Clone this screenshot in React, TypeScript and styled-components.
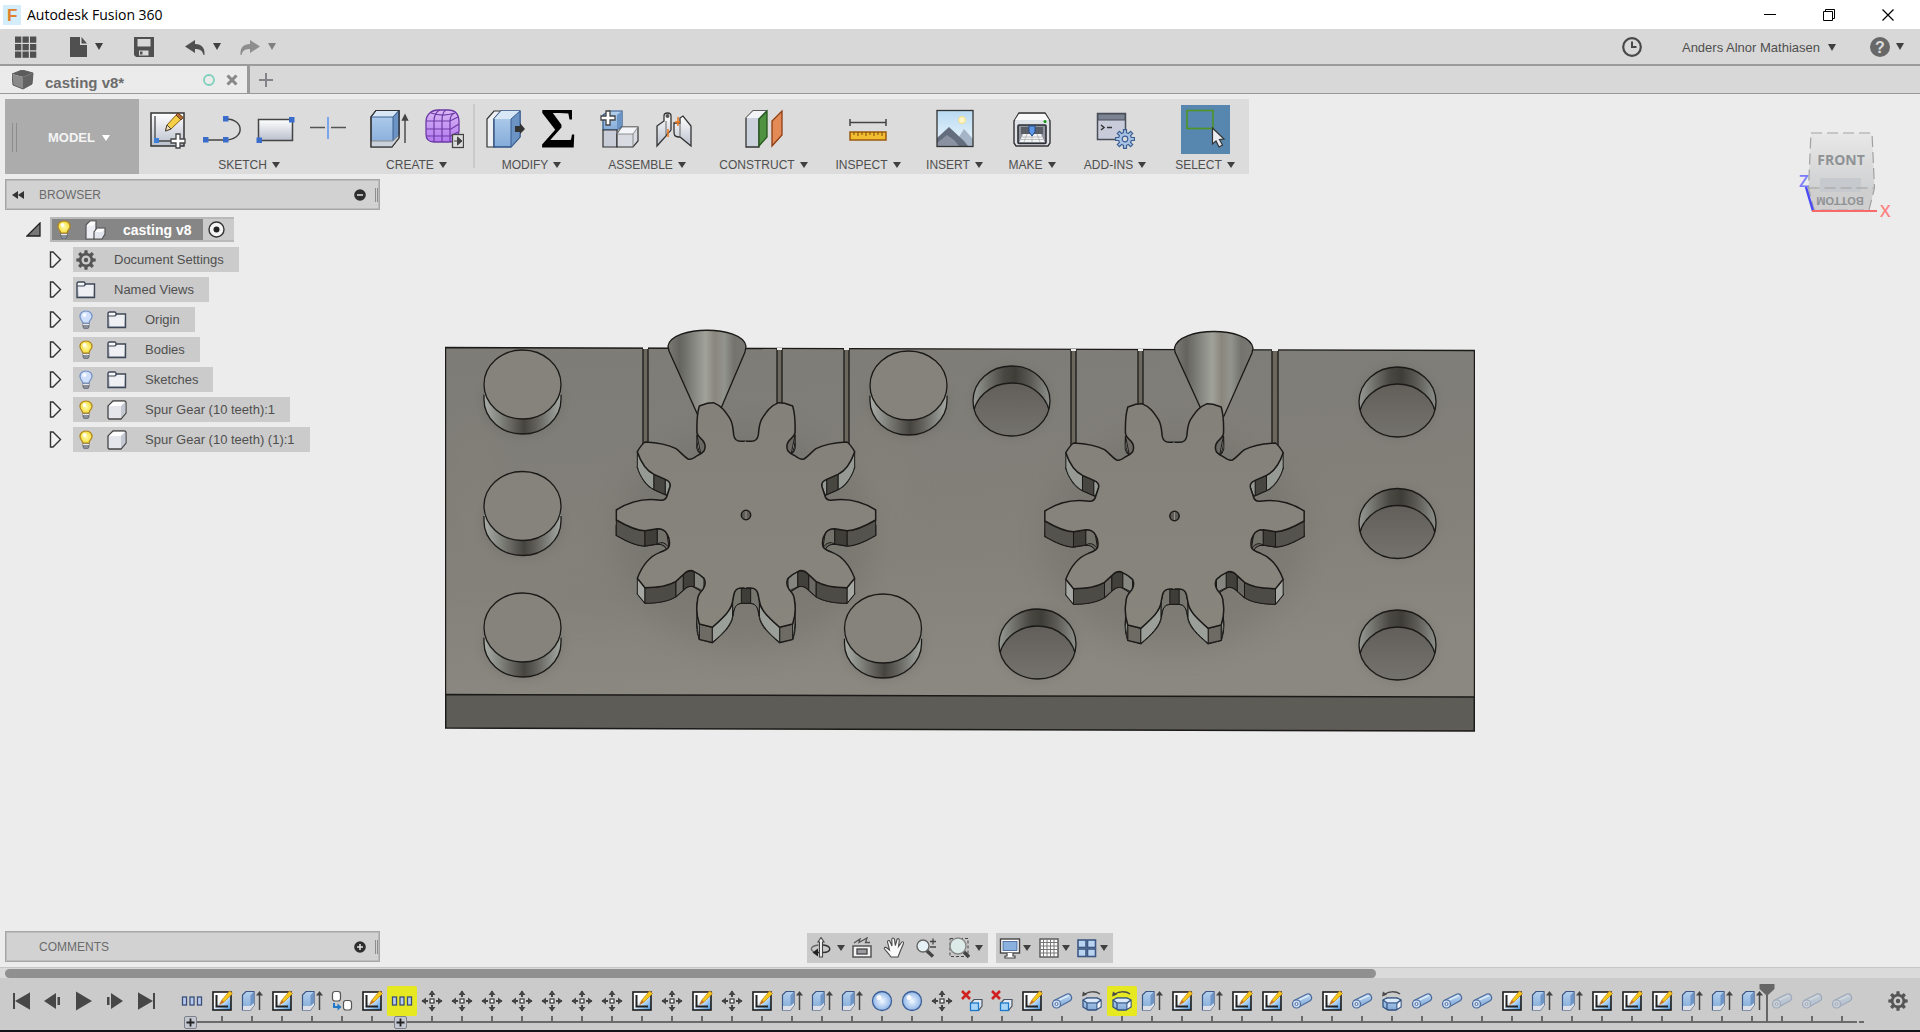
import React from "react";
import styled, { createGlobalStyle, css } from "styled-components";

const GlobalStyle = createGlobalStyle`
  * { box-sizing: border-box; }
  body {
    margin: 0;
    font-family: "Liberation Sans", Arial, sans-serif;
    font-size: 13px;
    color: #4f4f4f;
    background: #ececec;
  }
  button {
    border: 0;
    padding: 0;
    background: none;
    font: inherit;
    color: inherit;
    display: flex;
    align-items: center;
  }
  svg { display: block; flex: none; }
`;

const App = styled.div`
  min-height: 100vh;
  display: flex;
  flex-direction: column;
`;

const Spacer = styled.div`
  flex: 1;
`;

const Caret = styled.span<{ $small?: boolean; $color?: string }>`
  flex: none;
  width: 0;
  height: 0;
  border-style: solid;
  border-width: ${(p) => (p.$small ? "6px 4px 0" : "7px 4px 0")};
  border-color: ${(p) => p.$color || "#404040"} transparent transparent;
`;

/* ---------- title bar ---------- */

const TitleBar = styled.header`
  height: 29px;
  flex: none;
  display: flex;
  align-items: center;
  padding-left: 3px;
  gap: 6px;
  background: #fff;
`;

const AppTitle = styled.h1`
  margin: 0;
  flex: 1;
  font: 400 14px/20px "Open Sans", sans-serif;
  color: #000;
`;

const WindowButton = styled.button`
  width: 59px;
  height: 29px;
  justify-content: center;
`;

const WindowControls = styled.div`
  display: flex;
  padding-right: 3px;
`;

/* ---------- quick access bar ---------- */

const QuickBar = styled.div`
  height: 37px;
  flex: none;
  display: flex;
  align-items: center;
  padding: 0 16px 0 15px;
  background: #d8d8d8;
  border-bottom: 2px solid #9b9b9b;
`;

const QuickGroup = styled.div<{ $gap: number }>`
  display: flex;
  align-items: center;
  gap: ${(p) => p.$gap}px;
`;

const QuickButton = styled.button<{ $gap?: number }>`
  gap: ${(p) => p.$gap ?? 8}px;
  min-width: 20px;
  height: 24px;
`;

const UserButton = styled(QuickButton)`
  min-width: 160px;
  justify-content: flex-end;
  padding-top: 2px;
`;

/* ---------- document tabs ---------- */

const TabBar = styled.nav`
  height: 28px;
  flex: none;
  display: flex;
  background: #d8d8d8;
  border-bottom: 1px solid #999;
`;

const Tab = styled.div`
  width: 250px;
  display: flex;
  align-items: center;
  padding: 0 9px 0 12px;
  gap: 11px;
  background: #ebebeb;
  border-right: 3px solid #999;
`;

const TabName = styled.button`
  flex: 1;
  font-size: 15px;
  font-weight: 700;
  color: #6c6c6c;
  padding-top: 6px;
`;

const NewTab = styled.button`
  width: 32px;
  padding-left: 9px;
`;

/* ---------- viewport ---------- */

const Viewport = styled.main`
  position: relative;
  flex: 1;
  display: flex;
  flex-direction: column;
  align-items: flex-start;
  padding: 5px 5px 4px;
  background: #ececec;
`;

const ModelCanvas = styled.div`
  position: absolute;
  top: 226px;
  left: 0;
  right: 0;
  display: flex;
  justify-content: center;
`;

const CubeCanvas = styled.div`
  position: absolute;
  top: 32px;
  right: 24px;
`;

/* ---------- ribbon ---------- */

const Ribbon = styled.div`
  position: relative;
  display: flex;
  height: 75px;
  background: #dcdcdc;
`;

const Workspace = styled.button`
  width: 134px;
  background: #acacac;
  color: #f4f4f4;
  font-size: 13px;
  font-weight: 700;
  padding: 2px 0 0 7px;
  gap: 7px;
`;

const Grip = styled.span<{ $h: number; $gap: number }>`
  width: ${(p) => p.$gap + 2}px;
  height: ${(p) => p.$h}px;
  border: solid #8d8d8d;
  border-width: 0 1px;
`;

const WorkspaceName = styled.span`
  padding-left: 24px;
`;

const Group = styled.section<{ $w: number }>`
  width: ${(p) => p.$w}px;
  display: flex;
  flex-direction: column;
  align-items: center;
  padding-top: 5px;
  position: relative;
  & + &::before {
    content: "";
    position: absolute;
    left: -1px;
    top: 5px;
    bottom: 6px;
    width: 2px;
    background: #cacaca;
  }
`;

const GroupTools = styled.div`
  display: flex;
  gap: 14px;
  height: 50px;
  align-items: center;
`;

const Tool = styled.button<{ $active?: boolean }>`
  width: 40px;
  height: 40px;
  justify-content: center;
  ${(p) =>
    p.$active &&
    css`
      width: 49px;
      height: 49px;
      background: #5786ae;
    `}
`;

const Sigma = styled.span`
  font: 700 56px/40px "Liberation Serif", serif;
  color: #000;
`;

const GroupLabel = styled.button`
  height: 20px;
  padding-top: 2px;
  font-size: 12px;
  gap: 5px;
`;

/* ---------- side panels ---------- */

const Panel = styled.div`
  width: 375px;
  height: 31px;
  display: flex;
  align-items: center;
  background: #d2d2d2;
  border: 1px solid #a6a6a6;
  outline: 1px solid #bcbcbc;
  outline-offset: -2px;
  font-size: 12px;
  color: #6b6b6b;
  padding: 0 1px 0 6px;
`;

const BrowserPanel = styled(Panel)`
  margin-top: 5px;
  position: relative;
`;

const PanelTitle = styled.h2`
  margin: 0;
  flex: 1;
  font-size: 12px;
  font-weight: 400;
`;

const PanelEnd = styled.div`
  display: flex;
  align-items: center;
  gap: 9px;
`;

const PanelIcon = styled.button`
  width: 27px;
  height: 20px;
`;

const Tree = styled.ul`
  list-style: none;
  margin: 7px 0 0;
  padding: 0 0 0 21px;
  display: flex;
  flex-direction: column;
  gap: 5px;
  position: relative;
`;

const Node = styled.li<{ $child?: boolean }>`
  display: flex;
  align-items: center;
  height: 25px;
  padding-left: ${(p) => (p.$child ? 23 : 0)}px;
`;

const Twisty = styled.button`
  width: 24px;
  height: 20px;
`;

const NodeBox = styled.div`
  height: 25px;
  display: flex;
  align-items: center;
  background: #cbcbcb;
  padding: 0 15px 0 3px;
`;

const NodeIcon = styled.span<{ $wide?: boolean }>`
  width: ${(p) => (p.$wide ? 38 : 31)}px;
  display: flex;
`;

const RootBox = styled(NodeBox)`
  padding: 0 9px 0 0;
  border: 2px solid #b9b9b9;
  border-width: 2px 0 2px 2px;
  gap: 5px;
`;

const RootName = styled.div`
  display: flex;
  align-items: center;
  height: 21px;
  padding: 0 12px 0 2px;
  background: #868686;
  color: #fff;
  font-size: 14px;
  font-weight: 700;
`;

/* ---------- bottom row ---------- */

const BottomRow = styled.div`
  align-self: stretch;
  display: grid;
  grid-template-columns: 1fr auto 1fr;
  align-items: start;
  margin-top: auto;
  position: relative;
`;

const NavBar = styled.div`
  display: flex;
  gap: 8px;
  padding-top: 2px;
`;

const NavGroup = styled.div`
  display: flex;
  align-items: center;
  height: 30px;
  padding: 0 3px;
  background: #c9c9c9;
`;

const NavButton = styled.button<{ $w: number; $gap?: number }>`
  width: ${(p) => p.$w}px;
  height: 30px;
  gap: ${(p) => p.$gap ?? 2}px;
`;

/* ---------- timeline ---------- */

const ScrollTrack = styled.div`
  height: 11px;
  flex: none;
  background: #dadada;
  border-top: 1px solid #c6c6c6;
  padding: 1px 0 0 5px;
`;

const ScrollThumb = styled.div`
  height: 9px;
  width: 71.6%;
  border-radius: 5px;
  background: #909090;
`;

const Timeline = styled.footer`
  height: 54px;
  flex: none;
  display: flex;
  padding: 8px 7px 0 6px;
  background: #cbcbcb;
  border-bottom: 2px solid #15131a;
`;

const Playback = styled.div`
  display: flex;
  padding-right: 16px;
`;

const PlayButton = styled.button`
  width: 31px;
  height: 30px;
  justify-content: center;
`;

const Steps = styled.ol`
  list-style: none;
  display: flex;
  margin: 0;
  padding: 0;
`;

const Step = styled.li<{ $first?: boolean; $faded?: boolean }>`
  width: 30px;
  position: relative;
  &::before {
    content: "";
    position: absolute;
    left: ${(p) => (p.$first ? 15 : 0)}px;
    right: 0;
    top: 35px;
    height: 2px;
    background: #6a6a6a;
  }
  &::after {
    content: "";
    position: absolute;
    left: 14px;
    top: 30px;
    width: 2px;
    height: 6px;
    background: #6a6a6a;
  }
  svg { opacity: ${(p) => (p.$faded ? 0.35 : 1)}; }
`;

const StepButton = styled.button<{ $hot?: boolean }>`
  width: 30px;
  height: 30px;
  justify-content: center;
  border-radius: 2px;
  background: ${(p) => (p.$hot ? "#e6e822" : "none")};
`;

const Expand = styled.button`
  position: absolute;
  z-index: 1;
  left: 7px;
  top: 30px;
  width: 13px;
  height: 13px;
  border: 1px solid #7d8088;
  border-radius: 2px;
  background: #c3c7d2;
  justify-content: center;
`;

const Dashes = styled.span`
  width: 7px;
  height: 2px;
  margin-top: 35px;
  background: linear-gradient(90deg, transparent 2px, #6a6a6a 2px);
`;

const Marker = styled.span`
  position: absolute;
  z-index: 1;
  left: 22px;
  top: -2px;
`;

/* ---------- icons ---------- */

const HiddenSvg = styled.svg`
  position: absolute;
`;

const Defs = () => (
  <HiddenSvg width="0" height="0" aria-hidden="true">
    <defs>
      <linearGradient id="paper" x1="0" y1="0" x2="0" y2="1">
        <stop offset="0" stopColor="#fff" />
        <stop offset="1" stopColor="#b9bfcc" />
      </linearGradient>
      <linearGradient id="blue" x1="0" y1="0" x2="0" y2="1">
        <stop offset="0" stopColor="#b4d0ee" />
        <stop offset="1" stopColor="#84abd8" />
      </linearGradient>
      <linearGradient id="violet" x1="0" y1="0" x2="0" y2="1">
        <stop offset="0" stopColor="#d9b8f5" />
        <stop offset="1" stopColor="#b378f0" />
      </linearGradient>
      <linearGradient id="skyline" x1="0" y1="0" x2="0" y2="1">
        <stop offset="0" stopColor="#b8daf2" />
        <stop offset="1" stopColor="#eef7fc" />
      </linearGradient>
      <linearGradient id="sheet" x1="0" y1="0" x2="1" y2="1">
        <stop offset="0.4" stopColor="#fff" />
        <stop offset="1" stopColor="#3f8fe0" />
      </linearGradient>
      <radialGradient id="ball" cx="0.5" cy="0.5" r="0.5">
        <stop offset="0" stopColor="#f2f8ff" />
        <stop offset="1" stopColor="#8fb6e8" />
      </radialGradient>
      <radialGradient id="lampOn">
        <stop offset="0" stopColor="#fffbb0" />
        <stop offset="1" stopColor="#f5df3c" />
      </radialGradient>
    </defs>
  </HiddenSvg>
);

const Svg = ({ w, h = w, children }: { w: number; h?: number; children: React.ReactNode }) => (
  <svg width={w} height={h} viewBox={`0 0 ${w} ${h}`} fill="none" aria-hidden="true">
    {children}
  </svg>
);

const LogoIcon = () => (
  <svg width="18" height="20" viewBox="0 0 18 20" aria-hidden="true">
    <rect width="18" height="20" fill="#d3eefa" />
    <text x="4" y="16" fontFamily="Liberation Sans" fontWeight="700" fontSize="17" fill="#e0812d">F</text>
  </svg>
);

const GridIcon = () => (
  <Svg w={24} h={22}>
    {[0, 1, 2].map((r) => [0, 1, 2].map((c) => <rect key={`${r}${c}`} x={c * 7.5} y={r * 7.5 + 0.5} width="6.3" height="6.3" fill="#505050" />))}
  </Svg>
);
const FileIcon = () => (
  <Svg w={17} h={20}>
    <path d="M0 0H10V8H17V20H0Z" fill="#505050" />
    <path d="M11.500 0V6.500H17Z" fill="#505050" />
  </Svg>
);
const SaveIcon = () => (
  <Svg w={20}>
    <path d="M0 0H20V20H2L0 18Z" fill="#505050" />
    <path d="M3.500 2H16.500V9.500H3.500ZM5 13.500H14.500V18.500H5Z" fill="#d8d8d8" />
    <path d="M6 14.500H8.500V17.500H6Z" fill="#505050" />
  </Svg>
);
const ArrowIcon = ({ flip, color }: { flip?: boolean; color: string }) => (
  <Svg w={20} h={18}>
    <g transform={flip ? "translate(20 0) scale(-1 1)" : undefined}>
      <path d="M0 8.500L10 2V6C17 6 20 10 19.500 17H18.500C17.500 13 15.500 11 10 11V15Z" fill={color} />
    </g>
  </Svg>
);
const ClockIcon = () => (
  <Svg w={20}>
    <circle cx="10" cy="10" r="8.800" stroke="#484848" strokeWidth="2.200" />
    <path d="M10 4.500V10H14.500" stroke="#484848" strokeWidth="2" />
  </Svg>
);
const HelpIcon = () => (
  <svg width="20" height="20" viewBox="0 0 20 20" aria-hidden="true">
    <circle cx="10" cy="10" r="10" fill="#686868" />
    <text x="10" y="15.500" textAnchor="middle" fontFamily="Liberation Sans" fontWeight="700" fontSize="16" fill="#dcdcdc">?</text>
  </svg>
);
const TabCube = () => (
  <Svg w={22} h={20}>
    <path d="M0 4L10 0L21 3L11 7Z" fill="#5c5c5c" />
    <path d="M0 4L11 7V19L1 15Z" fill="#8a8a8a" />
    <path d="M11 7L21 3L20 14L11 19Z" fill="#636363" />
    <path d="M0 4L1 15L11 19L20 14L21 3L10 0Z" stroke="#5c5c5c" />
  </Svg>
);

const PlusBadge = ({ x, y }: { x: number; y: number }) => (
  <path transform={`translate(${x} ${y})`} d="M-2 -7H2V-2H7V2H2V7H-2V2H-7V-2H-2Z" fill="#fff" stroke="#444" strokeWidth="1.300" />
);

const SketchIcon = () => (
  <Svg w={40}>
    <rect x="3" y="4" width="33" height="33" fill="url(#paper)" stroke="#333" strokeWidth="1.500" />
    <path d="M7 7V32H29" stroke="#444" strokeWidth="1.300" />
    <rect x="6" y="29" width="5" height="5" fill="#3f7fd8" />
    <path d="M17.500 22L19 16L30 4L35 8.500L23 20Z" fill="#f5cf45" stroke="#8a5a12" />
    <path d="M28 6L30 4L35 8.500L33 11Z" fill="#b5703a" stroke="#6b3d18" />
    <path d="M17.500 22L19 16L23 20Z" fill="#f5e2b5" stroke="#444" />
    <PlusBadge x={30} y={32} />
  </Svg>
);
const LineIcon = () => (
  <Svg w={40}>
    <path d="M4 31H23C43 31 43 10 24 10" stroke="#444" strokeWidth="1.500" />
    {[[1, 28], [21, 28], [21, 7]].map(([x, y]) => <rect key={`${x}${y}`} x={x} y={y} width="5.500" height="5.500" fill="#3a6ccc" />)}
  </Svg>
);
const RectIcon = () => (
  <Svg w={40}>
    <rect x="2.500" y="10.500" width="34" height="21" fill="url(#paper)" stroke="#444" strokeWidth="1.500" />
    <rect x="33" y="8" width="5.500" height="5.500" fill="#3a6ccc" />
    <rect x="0.500" y="28.500" width="5.500" height="5.500" fill="#3a6ccc" />
  </Svg>
);
const PointIcon = () => (
  <Svg w={40}>
    <path d="M0 18.500H15M21 18.500H36" stroke="#555" strokeWidth="1.500" />
    <path d="M18 8V30" stroke="#5a94f0" strokeWidth="1.500" />
  </Svg>
);
const ExtrudeIcon = () => (
  <Svg w={40}>
    <path d="M1 32V8L6 1.500H29V28L22 38H1Z" fill="url(#blue)" stroke="#333" strokeWidth="1.200" />
    <path d="M1 8L6 1.500H29L23 8Z" fill="#d8e7f6" stroke="#3a5f92" />
    <path d="M23 8L29 1.500V26L23 33Z" fill="#6b93c4" stroke="#3a5f92" />
    <path d="M1 32H23L29 26V29L22 38H1Z" fill="#ccd2dc" stroke="#888" />
    <path d="M1 32V8L6 1.500H29V29L22 38H1Z" stroke="#333" strokeWidth="1.200" />
    <path d="M35 34V8M32.500 11L35 6L37.500 11Z" stroke="#444" strokeWidth="1.400" fill="#444" />
  </Svg>
);
const FormIcon = () => (
  <Svg w={40}>
    <path d="M2 13C2 5 8 1 14 1H24C31 1 35 5 35 13V22C35 28 31 33 25 33H10C5 33 2 30 2 25Z" fill="url(#violet)" stroke="#6d3aa5" strokeWidth="1.300" />
    <path d="M10 33V12C10 6 13 2 16 1M18 33V12C18 6 20 2 22 1M26 33V12C26 8 28 5 31 4M2 12H26L34 8M2 20H27L35 15M2 27H27L34 23M7 4C15 7 22 7 31 4" stroke="#6d3aa5" strokeWidth="1.200" />
    <rect x="28.500" y="25.500" width="11" height="13" fill="#ddd" stroke="#444" strokeWidth="1.300" />
    <path d="M30 32H34M33.500 28L38 32L33.500 36Z" fill="#444" stroke="#444" />
  </Svg>
);
const PressPullIcon = () => (
  <Svg w={40}>
    <path d="M2 36V10L9 2H16L9 10V38H2Z" fill="#eef0f3" stroke="#333" strokeWidth="1.200" />
    <path d="M9 38V10L16 2H35V28L26 38Z" fill="url(#blue)" stroke="#2d5286" strokeWidth="1.300" />
    <path d="M9 10L16 2H35L26 10Z" fill="#d8e7f6" />
    <path d="M26 10L35 2V28L26 38Z" fill="#6b93c4" stroke="#3a5f92" />
    <path d="M30 17H35V14L40 20L35 25V23H30Z" fill="#333" />
  </Svg>
);
const ComponentIcon = () => (
  <Svg w={40}>
    <path d="M3 21V6L9 2H22V17L17 21Z" fill="url(#blue)" stroke="#2d5286" strokeWidth="1.200" />
    <path d="M17 6L22 2V17L17 21Z" fill="#6b93c4" />
    <path d="M3 21H17V38H3Z" fill="#c9cdd8" stroke="#333" strokeWidth="1.200" />
    <path d="M17 38V25L22 18H38V32L33 38Z" fill="#d8dbe2" stroke="#333" strokeWidth="1.200" />
    <path d="M17 25L22 18H38L33 25Z" fill="#f4f5f8" stroke="#777" strokeWidth="0.800" />
    <path d="M33 25V38" stroke="#777" strokeWidth="0.800" />
    <PlusBadge x={8} y={9} />
  </Svg>
);
const JointIcon = () => (
  <Svg w={40}>
    <path d="M3 17L10 12V7C10 3 17 3 17 7V21C15 24 13 24 12 27L3 37Z" fill="url(#paper)" stroke="#333" strokeWidth="1.300" />
    <path d="M37 37L26 28C20 28 20 26 20 22V14H26V9L29 7L37 17Z" fill="url(#paper)" stroke="#333" strokeWidth="1.300" />
    <path d="M26 14V27M12 12V26" stroke="#666" />
    <path d="M14 20V28M24 8V17M21 13H26" stroke="#f07818" strokeWidth="1.500" />
    <circle cx="13.500" cy="7" r="2" fill="#555" />
  </Svg>
);
const PlaneIcon = () => (
  <Svg w={40}>
    <path d="M2 36V9L9 2H22L15 10V38H2Z" fill="#ccd3de" stroke="#333" strokeWidth="1.300" />
    <path d="M2 9L9 2H22L15 9Z" fill="#f2f4f7" />
    <path d="M15 37V10L23 2V28Z" fill="#4f9242" stroke="#24571d" strokeWidth="1.300" />
    <path d="M28 37V12L38 2V26Z" fill="#e48a57" stroke="#8f3d12" strokeWidth="1.300" />
  </Svg>
);
const MeasureIcon = () => (
  <Svg w={40}>
    <path d="M2 13.500H38M2 10V17M38 10V17" stroke="#444" strokeWidth="1.500" />
    <rect x="2" y="23" width="36" height="8" fill="#f2bd30" stroke="#9a5a0c" strokeWidth="1.500" />
    <path d="M6 23V26M10 23V27M14 23V26M18 23V27M22 23V26M26 23V27M30 23V26M34 23V27" stroke="#7b4a0a" />
  </Svg>
);
const ImageIcon = () => (
  <Svg w={40}>
    <rect x="2" y="1.500" width="36" height="36" fill="url(#skyline)" />
    <circle cx="27" cy="11" r="3.500" fill="#fff6c8" stroke="#f5dc82" />
    <path d="M18 37L29 20L38 30V37Z" fill="#a5b4c6" />
    <path d="M2 29L14 18L29 32L33 37H2Z" fill="#646d7e" />
    <path d="M2 34L12 26L19 31L24 37H2Z" fill="#8a92a2" />
    <rect x="2" y="1.500" width="36" height="36" stroke="#333" strokeWidth="1.300" />
  </Svg>
);
const PrinterIcon = () => (
  <Svg w={40}>
    <path d="M2 12L7 4H33L38 12V34L36 37H4L2 34Z" fill="#dfe2e7" stroke="#333" strokeWidth="1.400" />
    <path d="M3 11L7 5H33L37 11Z" fill="#fafafa" />
    <rect x="6" y="16" width="28" height="18.500" rx="1" fill="#8f949c" stroke="#2c2f34" strokeWidth="1.600" />
    <path d="M9 18H31V25H9Z" fill="#5a5e66" />
    <path d="M11 25H29L32.500 33H7.500Z" fill="#f2f3f5" />
    <path d="M10 28H30M9 30.500H31M15 25L12 33M20 25V33M25 25L28 33" stroke="#a8a8a8" strokeWidth="0.700" />
    <path d="M17 17H23V23L20 27L17 23Z" fill="#5e96e6" stroke="#244d90" />
    <circle cx="33" cy="12.500" r="1.500" fill="#149414" />
  </Svg>
);
const gearPath = (c: number, ro: number, ri: number, teeth: number) => {
  const pts: string[] = [];
  for (let i = 0; i < teeth; i++) {
    const a = (i / teeth) * Math.PI * 2 - Math.PI / 2;
    const step = (Math.PI * 2) / teeth;
    [[-0.3, ri], [-0.2, ro], [0.2, ro], [0.3, ri]].forEach(([o, r]) => {
      pts.push(`${(c + Math.cos(a + o * step) * r).toFixed(2)} ${(c + Math.sin(a + o * step) * r).toFixed(2)}`);
    });
  }
  return `M${pts.join("L")}Z`;
};
const AddInsIcon = () => (
  <Svg w={40}>
    <rect x="2.500" y="4.500" width="28" height="26" fill="#c8ccda" stroke="#4a4e58" strokeWidth="1.500" />
    <rect x="3" y="5" width="27" height="6" fill="#7c8494" stroke="#4a4e58" />
    <path d="M6 16L9 18.500L6 21M12 18.500H17" stroke="#333" strokeWidth="1.500" />
    <g transform="translate(20 20)">
      <path d={gearPath(10, 9.5, 6.5, 8)} fill="#a9c3e6" stroke="#3c5f92" strokeWidth="1.200" />
      <circle cx="10" cy="10" r="2.800" fill="#dcdcdc" stroke="#3c5f92" strokeWidth="1.200" />
    </g>
  </Svg>
);
const SelectIcon = () => (
  <Svg w={49}>
    <rect x="6" y="5.500" width="26" height="18" stroke="#4f9424" strokeWidth="1.600" />
    <path d="M31.500 23V39L35 36L38 42L41.500 40L38.500 34.500L43 34Z" fill="#e9ebf0" stroke="#333" strokeWidth="1.200" />
  </Svg>
);

const Bulb = ({ on }: { on?: boolean }) => (
  <Svg w={18} h={19}>
    <path d="M7 12H13V17L11.500 19H8.500L7 17Z" fill="#8a8f9a" stroke="#565b66" strokeWidth="0.800" />
    <path d="M7 14.500H13" stroke="#e8e8e8" />
    <path d="M10 1C5.500 1 3.800 4 4 7C4.200 9 6 10.500 7 13H13C13 10.500 15.800 9 16 7C16.200 4 14.500 1 10 1Z" fill={on ? "url(#lampOn)" : "#cfdffc"} stroke={on ? "#b0841c" : "#7290c4"} strokeWidth="1.200" />
    <circle cx="8.500" cy="5" r="2" fill="#fff" opacity="0.850" />
  </Svg>
);
const Folder = () => (
  <Svg w={20} h={18}>
    <path d="M1 2.500C1 1.500 1.500 1 2.500 1H8C9 1 9 2 9 3H18.500V16.500H1Z" fill="url(#paper)" stroke="#3e4756" strokeWidth="1.400" />
    <path d="M1 5H8L10 3" stroke="#3e4756" strokeWidth="1.200" />
    <path d="M3 6.500H17V15H3Z" fill="#eef0f4" />
  </Svg>
);
const BoxIcon = () => (
  <Svg w={20}>
    <path d="M1 18V6L6 1H17C18.500 1 19 1.500 19 3V13L14 19H2Z" fill="#e4e6ec" stroke="#444" strokeWidth="1.300" />
    <path d="M2 6L6.500 1.800H18L14 6Z" fill="#fff" />
    <path d="M14 6L18.300 2V13L14 18Z" fill="#c4c8d2" />
  </Svg>
);
const AssemblyIcon = () => (
  <Svg w={21} h={20}>
    <path d="M1 19V5L5 1H11V10L9 19Z" fill="#eceef3" stroke="#555" strokeWidth="1.200" />
    <path d="M1.800 5.500L5.500 1.700H10.500L8 5.500Z" fill="#fff" />
    <path d="M9 19V12L12 8H20V14L17 19Z" fill="#e2e5ec" stroke="#555" strokeWidth="1.200" />
    <path d="M10 12L12.500 9H19.500L17 12Z" fill="#fff" />
  </Svg>
);
const SettingsGear = () => (
  <Svg w={20}>
    <path d={gearPath(10, 9.8, 7.2, 8)} fill="#555" />
    <circle cx="10" cy="10" r="4.500" fill="#cbcbcb" />
    <circle cx="10" cy="10" r="2.200" fill="#555" />
  </Svg>
);
const RoundSign = ({ plus }: { plus?: boolean }) => (
  <Svg w={12}>
    <circle cx="6" cy="6" r="5.800" fill="#2e2e2e" />
    <path d={plus ? "M3 6H9M6 3V9" : "M3 6H9"} stroke="#e4e4e4" strokeWidth="1.500" />
  </Svg>
);

/* timeline icons */
const TSketch = () => (
  <Svg w={22}>
    <rect x="2" y="2" width="18" height="18" fill="url(#sheet)" stroke="#1c1c1c" strokeWidth="1.600" />
    <path d="M5.500 5V16.500H17" stroke="#222" strokeWidth="2" />
    <path d="M9 14L11 10L18.500 1L21.500 3.500L13 12Z" fill="#f7c81c" stroke="#c98a14" strokeWidth="0.800" />
    <path d="M8 15.500L11 10L13 12Z" fill="#c4702a" />
  </Svg>
);
const TExtrude = () => (
  <Svg w={22}>
    <path d="M1.500 16V5L5 1.500H13V15L9.500 20H1.500Z" fill="url(#blue)" stroke="#3c5884" strokeWidth="1.200" />
    <path d="M9.500 5.500L13 1.500V15L9.500 16Z" fill="#6d94c6" />
    <path d="M2 16H9.500L13 13V15.500L9.500 20H2Z" fill="#dde0e6" />
    <path d="M18.500 20V3" stroke="#444" strokeWidth="1.500" />
    <path d="M15 5.500L18.500 1L22 5.500Z" fill="#444" />
  </Svg>
);
const TPattern = () => (
  <Svg w={22}>
    {[1.5, 9, 16.5].map((x) => <rect key={x} x={x} y="7" width="4" height="8" fill="#b9cdf0" stroke="#3a4e78" strokeWidth="1.300" />)}
  </Svg>
);
const TCopy = () => (
  <Svg w={22}>
    <rect x="1.500" y="1.500" width="8" height="9.500" rx="2.500" fill="#fff" stroke="#555" strokeWidth="1.200" />
    <rect x="12.500" y="10.500" width="8" height="9.500" rx="2.500" fill="#fff" stroke="#555" strokeWidth="1.200" />
    <path d="M3 13V17H7" stroke="#1f78c8" strokeWidth="2" />
    <path d="M6.500 13.500L10.500 17L6.500 20.500Z" fill="#1f78c8" />
  </Svg>
);
const TMove = () => (
  <Svg w={22}>
    <rect x="9" y="9" width="4" height="4" fill="#fff" stroke="#444" strokeWidth="1.300" />
    <path d="M11 1V7M11 15V21M1 11H7M15 11H21" stroke="#444" strokeWidth="2" />
    <path d="M7.500 5L11 0.500L14.500 5ZM7.500 17L11 21.500L14.500 17ZM5 7.500L0.500 11L5 14.500ZM17 7.500L21.500 11L17 14.500Z" fill="#444" />
  </Svg>
);
const TSphere = () => (
  <Svg w={22}>
    <circle cx="11" cy="11" r="9.500" fill="url(#ball)" stroke="#3c5e96" strokeWidth="1.300" />
    <circle cx="8" cy="7.500" r="2.500" fill="#fff" opacity="0.900" />
  </Svg>
);
const TDelete = () => (
  <Svg w={22}>
    <path d="M1 1L9 9M9 1L1 9" stroke="#d02020" strokeWidth="2.600" />
    <path d="M10 20V13L13 9.500H21V16L17.500 20.500Z" fill="#dfe9f5" stroke="#4c545f" strokeWidth="1.200" />
    <rect x="9.500" y="13" width="8" height="7.500" fill="#a8d4f8" stroke="#1c78c8" strokeWidth="1.300" />
  </Svg>
);
const TCylinder = () => (
  <Svg w={22}>
    <path d="M3 10.500L16 4C20 3 22 8 19.500 10.500L7 17.500Z" fill="url(#blue)" stroke="#4c6a9c" strokeWidth="1.200" />
    <path d="M8 10L18 5.500" stroke="#dcebfa" strokeWidth="1.500" />
    <ellipse cx="5.500" cy="14" rx="4" ry="4" fill="#cfe0f4" stroke="#4c6a9c" strokeWidth="1.200" />
    <circle cx="5.500" cy="14" r="1.500" fill="#eef4fb" stroke="#4c6a9c" />
  </Svg>
);
const TRevolve = () => (
  <Svg w={22}>
    <path d="M3 5C7 1 15 1 19 4" stroke="#4a4a4a" strokeWidth="1.500" />
    <path d="M1 6.500L2 1.500L6 4.500Z" fill="#4a4a4a" />
    <path d="M2 10L6 8H16L20 10V17L15 20H7L2 17Z" fill="url(#blue)" stroke="#35527f" strokeWidth="1.300" />
    <path d="M2 10L6 13H16L20 10M6 13V19M16 13V19" stroke="#35527f" strokeWidth="1.200" />
    <path d="M3.500 10L6.500 8.800H15.500L18.500 10L15.500 12H6.500Z" fill="#dce9f8" />
    <path d="M16.500 14L19.500 11.500V16.500L16.500 18.500Z" fill="#f2f5fa" />
  </Svg>
);

/* navigation icons */
const OrbitIcon = () => (
  <Svg w={22}>
    <path d="M13 8C22 9 22 15 13 15.500H6" stroke="#333" strokeWidth="1.500" />
    <path d="M8.500 8C0 9 0 13 4 15" stroke="#666" strokeWidth="1.300" />
    <path d="M8 5L11 0.500L14 5H12.500V20H9.500V5Z" fill="#f4f4f4" stroke="#444" strokeWidth="1.100" />
    <path d="M2.500 15.500L8 11.500V19.500Z" fill="#222" />
  </Svg>
);
const LookIcon = () => (
  <Svg w={22}>
    <rect x="2" y="9" width="18" height="11" fill="#f4f4f4" stroke="#555" strokeWidth="1.500" />
    <rect x="6" y="12" width="10" height="5" fill="#9a9ca2" stroke="#444" strokeWidth="1.300" />
    <path d="M3 6L9 2L8 5.500L16 1L14.500 5.500H19" stroke="#555" strokeWidth="1.300" />
  </Svg>
);
const HandIcon = () => (
  <Svg w={22}>
    <path d="M8 20C6 17 3 14 1.500 12C1 10 3 10 4 11L6.500 13L4.500 5C4.300 3 6.500 3 7 4.500L9 9L8.800 2.500C9 0.500 11 0.500 11.500 2.500L12.300 8.500L14 2.500C14.500 1 16.500 1.500 16.300 3.500L15.500 9.500L18.500 5.500C19.500 4 21 5 20.500 6.500L17.500 13.500L15 20Z" fill="#fafafa" stroke="#4a4a4a" strokeWidth="1.100" />
  </Svg>
);
const ZoomIcon = () => (
  <Svg w={22}>
    <path d="M11 13L18 19.500" stroke="#444" strokeWidth="3.500" />
    <circle cx="8" cy="9" r="6" fill="#e6f2f8" stroke="#666" strokeWidth="1.400" />
    <path d="M15 4.500H21M18 1.500V7.500M15 10H21" stroke="#444" strokeWidth="1.300" />
  </Svg>
);
const FitIcon = () => (
  <Svg w={22}>
    <rect x="2" y="1.500" width="18" height="18" stroke="#444" strokeDasharray="3 2" />
    <path d="M15 14L21 20" stroke="#444" strokeWidth="3.500" />
    <circle cx="10" cy="9" r="8" fill="#dcebe8" stroke="#888" strokeWidth="1.400" />
  </Svg>
);
const DisplayIcon = () => (
  <Svg w={22}>
    <rect x="1.500" y="2" width="19" height="14" fill="#fff" stroke="#444" strokeWidth="1.400" />
    <rect x="4" y="4.500" width="14" height="9" fill="#8ab0dd" stroke="#3c5e96" strokeWidth="0.800" />
    <path d="M8 16V19H6V21H16V19H14V16" fill="#fff" stroke="#444" strokeWidth="1.200" />
  </Svg>
);
const GridsIcon = () => (
  <Svg w={22}>
    <rect x="2" y="2" width="18" height="18" fill="#fff" stroke="#555" strokeWidth="1.400" />
    <path d="M5.500 2V20M9 2V20M12.500 2V20M16 2V20M2 5.500H20M2 9H20M2 12.500H20M2 16H20" stroke="#777" />
  </Svg>
);
const ViewsIcon = () => (
  <Svg w={22}>
    {[[2, 3], [11.5, 3], [2, 12], [11.5, 12]].map(([x, y]) => <rect key={`${x}-${y}`} x={x} y={y} width="8" height="7.500" fill="#b9d3f0" stroke="#3c5884" strokeWidth="1.600" />)}
  </Svg>
);

/* ---------- 3D model ---------- */

const INK = "#1b1a18";

// Left half of the ten-tooth outline, traced around a centre line at x = 948.
const HALF =
  "M948 364H932Q914 364 911 345C909 325 909 312 900 296C885 272 875 258 850 248L832 250L808 258C800 285 800 310 801 338Q803 348 812 355Q832 372 822 393Q815 402 800 408Q785 420 774 417C762 410 752 396 738 386C715 374 690 368 645 366Q634 374 622 395C632 425 650 452 672 463L706 478Q724 486 720 500L712 525Q708 542 692 541C660 536 615 534 559 570V600C590 618 620 632 645 632L682 626Q704 626 711 642Q722 660 717 680Q712 690 690 697C655 710 636 738 622 775L645 803C680 803 715 798 738 784L760 764Q772 750 787 752Q808 762 822 775Q830 790 820 806C808 820 802 828 802 846C798 870 804 900 808 912L847 922C878 894 906 870 908 842L912 822Q916 804 934 804H948";

// Wall patches: stretches of the outline, dropped by the wall height.
const PATCHES: [string, string][] = [
  ["M622 395C632 425 650 452 672 463V509C650 498 628 468 622 440Z", "#969a94"],
  ["M672 463L706 478V524L672 509Z", "#484640"],
  ["M706 478Q724 486 720 500L712 522L706 524Z", "#969a94"],
  ["M559 600C590 618 620 632 645 632V678C620 678 590 664 559 646Z", "#55534d"],
  ["M645 632L682 626V672L645 678Z", "#403e39"],
  ["M682 626Q704 626 711 642L717 682Q700 660 682 672Z", "#72716a"],
  ["M622 775L645 803V850L622 822Z", "#a4a7a2"],
  ["M645 803C680 803 715 798 738 784V830C715 845 680 850 645 850Z", "#4d4b45"],
  ["M738 784L760 764V810L738 830Z", "#6a6963"],
  ["M760 764Q772 750 793 754V800Q772 796 760 810Z", "#42403b"],
  ["M793 754Q808 762 822 775L822 815L793 800Z", "#85867f"],
  ["M802 846C798 870 804 900 808 912V958C802 940 799 900 802 846Z", "#aab0aa"],
  ["M808 912L847 922V967L808 958Z", "#6d6b64"],
  ["M847 922C878 894 906 870 908 842V888C904 915 878 942 847 967Z", "#9b9f99"],
  ["M908 842L912 822Q916 804 934 804V850Q912 850 908 888Z", "#77776f"],
];

const STEPS = Array.from({ length: 15 }, (_, i) => 45 - i * 3);

const SpurGear = ({ dx, dy }: { dx: number; dy: number }) => {
  const sides = ["", "translate(1896 0) scale(-1 1)"];
  return (
    <g transform={`translate(${430 + dx} ${320 + dy}) scale(0.33333)`}>
      {sides.map((t) => (
        <g key={t} transform={t}>
          <path d={HALF} transform="translate(0 46)" stroke={INK} strokeWidth="4.500" fill="#6c6a64" />
          {STEPS.map((s) => (
            <path key={s} d={`${HALF}Z`} transform={`translate(0 ${s})`} fill="#6c6a64" />
          ))}
          <path d="M801 345Q803 355 812 400Q800 390 801 345Z" fill="#969a94" stroke={INK} strokeWidth="3" />
        </g>
      ))}
      <path d="M932 804H964V850H932Z" fill="#3f3d38" stroke={INK} strokeWidth="3" />
      {sides.map((t) => (
        <g key={t} transform={t}>
          {PATCHES.map(([d, fill]) => (
            <path key={d} d={d} fill={fill} stroke={INK} strokeWidth="3" strokeLinejoin="round" />
          ))}
        </g>
      ))}
      {sides.map((t) => (
        <g key={t} transform={t}>
          <path d={`${HALF}H952V364Z`} fill="url(#gearFace)" />
          <path d={HALF} stroke={INK} strokeWidth="4.500" strokeLinejoin="round" />
        </g>
      ))}
      <circle cx="948" cy="585" r="14" fill="#605e58" stroke={INK} strokeWidth="4.500" />
      <path d="M948 573V597" stroke="#96958e" strokeWidth="3" />
    </g>
  );
};

const Peg = ({ x, y }: { x: number; y: number }) => (
  <g>
    <ellipse cx={x} cy={y + 17} rx="41" ry="36" fill="#4d4b46" opacity="0.160" filter="url(#soft)" />
    <path d={`M${x - 38.5} ${y}V${y + 15}A38.500 34.500 0 0 0 ${x + 38.5} ${y + 15}V${y}Z`} fill="url(#pegSide)" />
    <path d={`M${x - 38.5} ${y + 10}V${y + 15}A38.500 34.500 0 0 0 ${x + 38.5} ${y + 15}V${y + 10}`} stroke={INK} strokeWidth="1.300" />
    <ellipse cx={x} cy={y} rx="38.500" ry="34.500" fill="#85837b" stroke={INK} strokeWidth="1.300" />
  </g>
);

const Hole = ({ x, y, id }: { x: number; y: number; id: string }) => (
  <g>
    <clipPath id={id}>
      <ellipse cx={x} cy={y} rx="38.500" ry="35" />
    </clipPath>
    <ellipse cx={x} cy={y} rx="40" ry="37" fill="#4d4b46" opacity="0.160" filter="url(#soft)" />
    <ellipse cx={x} cy={y} rx="38.500" ry="35" fill="url(#holeWall)" />
    <g clipPath={`url(#${id})`}>
      <ellipse cx={x} cy={y + 17} rx="38.500" ry="35" fill="url(#holeFloor)" stroke={INK} strokeWidth="1.300" />
    </g>
    <ellipse cx={x} cy={y} rx="38.500" ry="35" stroke={INK} strokeWidth="1.300" />
  </g>
);

const Groove = ({ x, w, y, bottom }: { x: number; w: number; y: number; bottom: number }) => (
  <g>
    <rect x={x} y={y} width={w} height={bottom - y} fill="#6b675c" />
    <path d={`M${x} ${y}V${bottom}M${x + w} ${y}V${bottom}`} stroke={INK} strokeWidth="1.300" />
    <path d={`M${x} ${y}H${x + w}`} stroke="#ececec" strokeWidth="2" />
  </g>
);

const Model = () => (
  <svg width="1030" height="420" viewBox="445 320 1030 420" fill="none" role="img" aria-label="Casting mould with two spur gears">
    <defs>
      <filter id="soft" x="-30%" y="-30%" width="160%" height="160%">
        <feGaussianBlur stdDeviation="4" />
      </filter>
      <filter id="softer" x="-30%" y="-30%" width="160%" height="160%">
        <feGaussianBlur stdDeviation="16" />
      </filter>
      <linearGradient id="plate" x1="0" y1="0" x2="0.200" y2="1">
        <stop offset="0" stopColor="#7d7c76" />
        <stop offset="0.300" stopColor="#807e78" />
        <stop offset="0.650" stopColor="#83817a" />
        <stop offset="1" stopColor="#8b8881" />
      </linearGradient>
      <linearGradient id="gearFace" x1="0" y1="0" x2="0" y2="1">
        <stop offset="0" stopColor="#83817a" />
        <stop offset="1" stopColor="#88857d" />
      </linearGradient>
      <linearGradient id="pegSide">
        <stop offset="0" stopColor="#a9ada8" />
        <stop offset="0.150" stopColor="#8d908a" />
        <stop offset="0.330" stopColor="#6b6a64" />
        <stop offset="0.520" stopColor="#46443e" />
        <stop offset="0.680" stopColor="#62605a" />
        <stop offset="0.880" stopColor="#8b8e89" />
        <stop offset="1" stopColor="#a4a8a3" />
      </linearGradient>
      <linearGradient id="holeWall">
        <stop offset="0" stopColor="#969a95" />
        <stop offset="0.180" stopColor="#74746e" />
        <stop offset="0.400" stopColor="#4a4843" />
        <stop offset="0.550" stopColor="#3f3d38" />
        <stop offset="0.750" stopColor="#5c5a54" />
        <stop offset="1" stopColor="#8c908b" />
      </linearGradient>
      <linearGradient id="holeFloor" x1="0" y1="0" x2="0" y2="1">
        <stop offset="0" stopColor="#625f5a" />
        <stop offset="0.700" stopColor="#73716b" />
      </linearGradient>
      <linearGradient id="cone">
        <stop offset="0" stopColor="#7a7a74" />
        <stop offset="0.150" stopColor="#65645e" />
        <stop offset="0.300" stopColor="#7f807a" />
        <stop offset="0.480" stopColor="#a1a29a" />
        <stop offset="0.600" stopColor="#8a867d" />
        <stop offset="0.720" stopColor="#92948e" />
        <stop offset="0.850" stopColor="#74736d" />
        <stop offset="1" stopColor="#7a7a74" />
      </linearGradient>
    </defs>
    <path d="M445.500 347.500L1474.500 350.500V697L445.500 694.500Z" fill="url(#plate)" />
    <g filter="url(#softer)" opacity="0.200">
      <ellipse cx="880" cy="500" rx="22" ry="90" fill="#938a7c" />
      <ellipse cx="600" cy="600" rx="60" ry="14" fill="#737570" />
      <ellipse cx="746" cy="540" rx="130" ry="110" fill="#55554f" />
      <ellipse cx="1174" cy="541" rx="130" ry="110" fill="#55554f" />
      <ellipse cx="475" cy="500" rx="18" ry="80" fill="#8f867a" />
    </g>
    <path d="M445.500 694.500L1474.500 697V731L445.500 728Z" fill="#5d5c56" stroke={INK} strokeWidth="1.500" />
    <path d="M445.500 728V347.500L1474.500 350.500V731" stroke={INK} strokeWidth="1.400" />
    <Groove x={643} w={5} y={348} bottom={450} />
    <Groove x={777} w={5} y={349} bottom={410} />
    <Groove x={844} w={5} y={349} bottom={450} />
    <Groove x={1071} w={5} y={350} bottom={450} />
    <Groove x={1138} w={5} y={350} bottom={410} />
    <Groove x={1272} w={6} y={350} bottom={450} />
    <path d="M668 346C672 325 742 325 746 346L745 352L716 420H700L669 351Z" fill="url(#cone)" stroke={INK} strokeWidth="1.300" />
    <path d="M1174.500 348C1179 326 1249 326 1253 348L1252 353L1224 416L1206 420L1175 352Z" fill="url(#cone)" stroke={INK} strokeWidth="1.300" />
    <Peg x={522.5} y={384.5} />
    <Peg x={522.5} y={506} />
    <Peg x={522.5} y={627.5} />
    <Peg x={908.5} y={385.5} />
    <Peg x={883} y={628.5} />
    <Hole id="h1" x={1011.5} y={401} />
    <Hole id="h2" x={1037.5} y={644} />
    <Hole id="h3" x={1397.5} y={402} />
    <Hole id="h4" x={1397.5} y={523.5} />
    <Hole id="h5" x={1397.5} y={645} />
    <SpurGear dx={0} dy={0} />
    <SpurGear dx={428.5} dy={1} />
  </svg>
);

const ViewCube = () => (
  <svg width="100" height="100" viewBox="1796 126 100 100" fill="none" role="img" aria-label="View cube">
    <defs>
      <linearGradient id="cubeFront" x1="0" y1="0" x2="0" y2="1">
        <stop offset="0" stopColor="#e8e8e8" />
        <stop offset="1" stopColor="#d0d1d2" />
      </linearGradient>
    </defs>
    <path d="M1811 133H1872L1874.500 188H1808.500Z" fill="url(#cubeFront)" />
    <path d="M1808.500 188H1874.500L1869 210H1814Z" fill="#cfcfcf" />
    <rect x="1820" y="178" width="41" height="14" fill="#c6c9cd" />
    <path d="M1811 133H1872L1874.500 188L1869 210H1814L1808.500 188ZM1808.500 188H1874.500" stroke="#a2a2a2" strokeWidth="1.200" strokeDasharray="11 5" />
    <text x="1841" y="165" textAnchor="middle" fontFamily="Open Sans" fontWeight="700" fontSize="14" fill="#8f9295">FRONT</text>
    <text transform="translate(1840 197) rotate(180)" textAnchor="middle" fontFamily="Liberation Sans" fontWeight="700" fontSize="11" fill="#8f9295">BOTTOM</text>
    <path d="M1813 211L1806 187" stroke="#4c4cf4" strokeWidth="2.500" />
    <path d="M1812 211H1877" stroke="#f86a6a" strokeWidth="2" />
    <text x="1799" y="187" fontFamily="Open Sans" fontWeight="600" fontSize="17" fill="#7c7cfa">Z</text>
    <text x="1880" y="217" fontFamily="Open Sans" fontWeight="600" fontSize="17" fill="#fc8484">X</text>
  </svg>
);

/* ---------- data ---------- */

type ToolDef = { name: string; icon: React.ReactNode; active?: boolean };
const GROUPS: { label: string; w: number; tools: ToolDef[] }[] = [
  { label: "SKETCH", w: 220, tools: [{ name: "Create sketch", icon: <SketchIcon /> }, { name: "Line", icon: <LineIcon /> }, { name: "Rectangle", icon: <RectIcon /> }, { name: "Point", icon: <PointIcon /> }] },
  { label: "CREATE", w: 115, tools: [{ name: "Extrude", icon: <ExtrudeIcon /> }, { name: "Create form", icon: <FormIcon /> }] },
  { label: "MODIFY", w: 115, tools: [{ name: "Press pull", icon: <PressPullIcon /> }, { name: "Parameters", icon: <Sigma>Σ</Sigma> }] },
  { label: "ASSEMBLE", w: 116, tools: [{ name: "New component", icon: <ComponentIcon /> }, { name: "Joint", icon: <JointIcon /> }] },
  { label: "CONSTRUCT", w: 117, tools: [{ name: "Offset plane", icon: <PlaneIcon /> }] },
  { label: "INSPECT", w: 92, tools: [{ name: "Measure", icon: <MeasureIcon /> }] },
  { label: "INSERT", w: 81, tools: [{ name: "Insert image", icon: <ImageIcon /> }] },
  { label: "MAKE", w: 74, tools: [{ name: "3D print", icon: <PrinterIcon /> }] },
  { label: "ADD-INS", w: 92, tools: [{ name: "Scripts and add-ins", icon: <AddInsIcon /> }] },
  { label: "SELECT", w: 88, tools: [{ name: "Select", icon: <SelectIcon />, active: true }] },
];

const NODES: { label: string; bulb?: "on" | "off"; icon: React.ReactNode }[] = [
  { label: "Document Settings", icon: <SettingsGear /> },
  { label: "Named Views", icon: <Folder /> },
  { label: "Origin", bulb: "off", icon: <Folder /> },
  { label: "Bodies", bulb: "on", icon: <Folder /> },
  { label: "Sketches", bulb: "off", icon: <Folder /> },
  { label: "Spur Gear (10 teeth):1", bulb: "on", icon: <BoxIcon /> },
  { label: "Spur Gear (10 teeth) (1):1", bulb: "on", icon: <BoxIcon /> },
];

const STEP_ICONS: Record<string, [string, React.ComponentType]> = {
  p: ["Pattern", TPattern],
  s: ["Sketch", TSketch],
  e: ["Extrude", TExtrude],
  j: ["Copy component", TCopy],
  m: ["Move", TMove],
  o: ["Sphere", TSphere],
  d: ["Delete", TDelete],
  c: ["Cylinder", TCylinder],
  r: ["Revolve", TRevolve],
};
const HISTORY = "psesejspmmmmmmmsmsmseeeoomddscrresesscscrcccseessseeeccc".split("");
const HOT = [7, 31];
const EXPANDABLE = [0, 7];
const CURRENT = 52;

const PLAY: [string, React.ReactNode][] = [
  ["Go to start", <path d="M3 3V19M18 4L6 11L18 18Z" fill="#474747" stroke="#474747" strokeWidth="2" />],
  ["Step back", <path d="M2 11L14 3V19ZM15.500 7H18V15H15.500Z" fill="#474747" />],
  ["Play", <path d="M3 1.500L19 11L3 20.500Z" fill="#474747" />],
  ["Step forward", <path d="M19 11L7 3V19ZM3 7H5.500V15H3Z" fill="#474747" />],
  ["Go to end", <path d="M19 3V19M4 4L16 11L4 18Z" fill="#474747" stroke="#474747" strokeWidth="2" />],
];

export default function FusionWindow() {
  return (
    <App>
      <GlobalStyle />
      <Defs />
      <TitleBar>
        <LogoIcon />
        <AppTitle>Autodesk Fusion 360</AppTitle>
        <WindowControls>
          <WindowButton aria-label="Minimize"><Svg w={12}><path d="M0 5.500H12" stroke="#000" /></Svg></WindowButton>
          <WindowButton aria-label="Restore"><Svg w={12}><path d="M0.500 2.500H9.500V11.500H0.500ZM2.500 2.500V0.500H11.500V9.500H9.500" stroke="#000" /></Svg></WindowButton>
          <WindowButton aria-label="Close"><Svg w={12}><path d="M0.500 0.500L11.500 11.500M11.500 0.500L0.500 11.500" stroke="#000" strokeWidth="1.200" /></Svg></WindowButton>
        </WindowControls>
      </TitleBar>

      <QuickBar>
        <QuickGroup $gap={31}>
          <QuickButton aria-label="Data panel"><GridIcon /></QuickButton>
          <QuickButton aria-label="File"><FileIcon /><Caret /></QuickButton>
          <QuickButton aria-label="Save"><SaveIcon /></QuickButton>
          <QuickGroup $gap={19}>
            <QuickButton aria-label="Undo"><ArrowIcon color="#505050" /><Caret /></QuickButton>
            <QuickButton aria-label="Redo"><ArrowIcon flip color="#8e8e8e" /><Caret $color="#808080" /></QuickButton>
          </QuickGroup>
        </QuickGroup>
        <Spacer />
        <QuickGroup $gap={34}>
          <QuickButton aria-label="Job status"><ClockIcon /></QuickButton>
          <UserButton>Anders Alnor Mathiasen<Caret /></UserButton>
          <QuickButton $gap={6} aria-label="Help"><HelpIcon /><Caret /></QuickButton>
        </QuickGroup>
      </QuickBar>

      <TabBar>
        <Tab>
          <TabCube />
          <TabName>casting v8*</TabName>
          <Svg w={12}><circle cx="6" cy="6" r="5" stroke="#7fd0bc" strokeWidth="1.800" /></Svg>
          <button aria-label="Close tab"><Svg w={12}><path d="M1.500 1.500L10.500 10.500M10.500 1.500L1.500 10.500" stroke="#888" strokeWidth="3" /></Svg></button>
        </Tab>
        <NewTab aria-label="New tab"><Svg w={14}><path d="M7 0V14M0 7H14" stroke="#84848a" strokeWidth="2" /></Svg></NewTab>
      </TabBar>

      <Viewport>
        <ModelCanvas><Model /></ModelCanvas>
        <CubeCanvas><ViewCube /></CubeCanvas>

        <Ribbon>
          <Workspace>
            <Grip $h={29} $gap={3} />
            <WorkspaceName>MODEL</WorkspaceName>
            <Caret $small $color="#fff" />
          </Workspace>
          {GROUPS.map((g) => (
            <Group key={g.label} $w={g.w}>
              <GroupTools>
                {g.tools.map((t) => <Tool key={t.name} aria-label={t.name} $active={t.active}>{t.icon}</Tool>)}
              </GroupTools>
              <GroupLabel>{g.label}<Caret $small /></GroupLabel>
            </Group>
          ))}
        </Ribbon>

        <BrowserPanel>
          <PanelIcon aria-label="Collapse browser"><Svg w={13} h={10}><path d="M6 1V9L0 5ZM12 1V9L6 5Z" fill="#333" /></Svg></PanelIcon>
          <PanelTitle>BROWSER</PanelTitle>
          <PanelEnd><RoundSign /><Grip $h={14} $gap={1} /></PanelEnd>
        </BrowserPanel>

        <Tree>
          <Node>
            <Twisty aria-label="Collapse casting v8"><Svg w={15}><path d="M14 1V14H1Z" fill="#777" stroke="#222" strokeWidth="1.300" /></Svg></Twisty>
            <RootBox>
              <RootName>
                <NodeIcon><Bulb on /></NodeIcon>
                <NodeIcon $wide><AssemblyIcon /></NodeIcon>
                casting v8
              </RootName>
              <Svg w={17}><circle cx="8.500" cy="8.500" r="7.500" fill="#f4f4f4" stroke="#333" strokeWidth="1.400" /><circle cx="8.500" cy="8.500" r="3" fill="#222" /></Svg>
            </RootBox>
          </Node>
          {NODES.map((n) => (
            <Node key={n.label} $child>
              <Twisty aria-label={`Expand ${n.label}`}><Svg w={13} h={17}><path d="M1.500 1H4L11.500 8.500L4 16H1.500Z" fill="#f2f2f2" stroke="#333" strokeWidth="1.400" /></Svg></Twisty>
              <NodeBox>
                {n.bulb && <NodeIcon><Bulb on={n.bulb === "on"} /></NodeIcon>}
                <NodeIcon $wide>{n.icon}</NodeIcon>
                {n.label}
              </NodeBox>
            </Node>
          ))}
        </Tree>

        <BottomRow>
          <Panel>
            <PanelIcon as="span" />
            <PanelTitle>COMMENTS</PanelTitle>
            <PanelEnd><RoundSign plus /><Grip $h={14} $gap={1} /></PanelEnd>
          </Panel>
          <NavBar>
            <NavGroup>
              <NavButton $w={41} $gap={5} aria-label="Orbit"><OrbitIcon /><Caret $small /></NavButton>
              <NavButton $w={32} aria-label="Look at"><LookIcon /></NavButton>
              <NavButton $w={32} aria-label="Pan"><HandIcon /></NavButton>
              <NavButton $w={33} aria-label="Zoom"><ZoomIcon /></NavButton>
              <NavButton $w={37} $gap={5} aria-label="Fit"><FitIcon /><Caret $small /></NavButton>
            </NavGroup>
            <NavGroup>
              <NavButton $w={39} aria-label="Display settings"><DisplayIcon /><Caret $small /></NavButton>
              <NavButton $w={38} aria-label="Grid and snaps"><GridsIcon /><Caret $small /></NavButton>
              <NavButton $w={34} aria-label="Viewports"><ViewsIcon /><Caret $small /></NavButton>
            </NavGroup>
          </NavBar>
        </BottomRow>
      </Viewport>

      <ScrollTrack><ScrollThumb /></ScrollTrack>
      <Timeline>
        <Playback>
          {PLAY.map(([name, shape]) => (
            <PlayButton key={name} aria-label={name}><Svg w={22}>{shape}</Svg></PlayButton>
          ))}
        </Playback>
        <Steps>
          {HISTORY.map((k, i) => {
            const [name, Icon] = STEP_ICONS[k];
            return (
              <Step key={i} $first={i === 0} $faded={i > CURRENT}>
                <StepButton aria-label={name} $hot={HOT.includes(i)}><Icon /></StepButton>
                {EXPANDABLE.includes(i) && (
                  <Expand aria-label="Expand group"><Svg w={9}><path d="M4.500 0.500V8.500M0.500 4.500H8.500" stroke="#222" strokeWidth="1.800" /></Svg></Expand>
                )}
                {i === CURRENT && (
                  <Marker><Svg w={16} h={38}><path d="M0.500 0H15.500V5L9 11V38H7V11L0.500 5Z" fill="#666" /></Svg></Marker>
                )}
              </Step>
            );
          })}
        </Steps>
        <Dashes />
        <Spacer />
        <PlayButton aria-label="Timeline settings"><SettingsGear /></PlayButton>
      </Timeline>
    </App>
  );
}
